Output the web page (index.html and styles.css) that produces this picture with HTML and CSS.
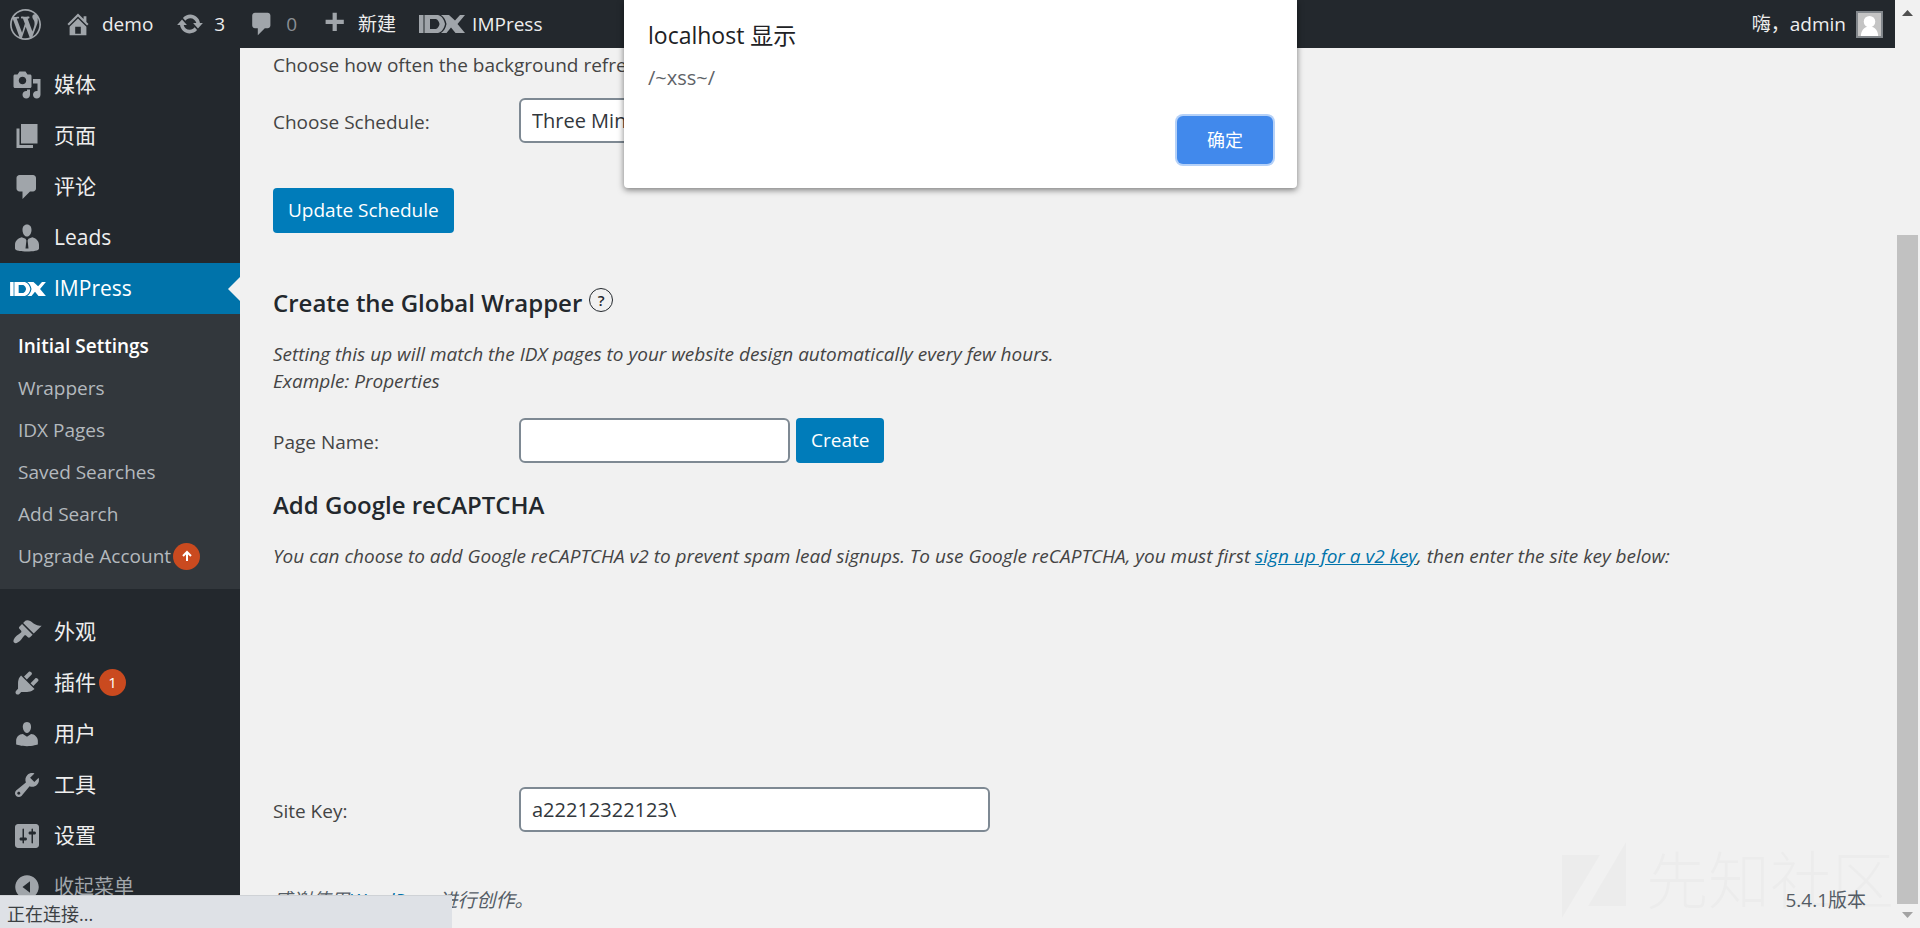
FILE: index.html
```html
<!DOCTYPE html>
<html lang="zh-CN">
<head>
<meta charset="utf-8">
<title>IMPress</title>
<link rel="stylesheet" href="styles.css">
</head>
<body>

<!-- icon sprite -->
<svg class="sprite" aria-hidden="true">
  <symbol id="i-wp" viewBox="0 0 20 20"><path d="M20 10c0-5.51-4.49-10-10-10C4.48 0 0 4.49 0 10c0 5.52 4.48 10 10 10 5.51 0 10-4.48 10-10zM7.78 15.37L4.37 6.22c.55-.02 1.17-.08 1.17-.08.5-.06.44-1.13-.06-1.11 0 0-1.45.11-2.37.11-.18 0-.37 0-.58-.01C4.12 2.69 6.87 1.11 10 1.11c2.33 0 4.45.87 6.05 2.34-.68-.11-1.65.39-1.65 1.58 0 .74.45 1.36.9 2.1.35.61.55 1.36.55 2.46 0 1.49-1.4 5-1.4 5l-3.03-8.37c.54-.02.82-.17.82-.17.5-.05.44-1.25-.06-1.22 0 0-1.44.12-2.38.12-.87 0-2.33-.12-2.33-.12-.5-.03-.56 1.2-.06 1.22l.92.08 1.26 3.41zM17.41 10c.24-.64.74-1.87.43-4.25.7 1.29 1.05 2.71 1.05 4.25 0 3.29-1.73 6.24-4.4 7.78.97-2.59 1.94-5.2 2.92-7.78zM6.1 18.09C3.12 16.65 1.11 13.53 1.11 10c0-1.3.23-2.48.72-3.59C3.25 10.3 4.67 14.2 6.1 18.09zm4.03-6.63l2.58 6.98c-.86.29-1.76.45-2.71.45-.79 0-1.57-.11-2.29-.33.81-2.38 1.62-4.74 2.42-7.1z"/></symbol>
  <symbol id="i-home" viewBox="0 0 20 20"><path d="M16 8.5l1.53 1.53-1.06 1.06L10 4.6l-6.47 6.49-1.06-1.06L10 2.5l4 4v-2h2v4zm-6-2.46l6 5.99V18H4v-5.97zM12 17v-5H8v5h4z"/></symbol>
  <symbol id="i-update" viewBox="0 0 20 20"><path d="M10.2 3.28c3.53 0 6.43 2.61 6.92 6h2.08l-3.5 4-3.5-4h2.32c-.45-1.97-2.21-3.45-4.32-3.45-1.45 0-2.73.71-3.54 1.78L4.95 5.66C6.23 4.2 8.11 3.28 10.2 3.28zm-.4 13.44c-3.52 0-6.43-2.61-6.92-6H.8l3.5-4c1.17 1.33 2.33 2.67 3.5 4H5.48c.45 1.97 2.21 3.45 4.32 3.45 1.45 0 2.73-.71 3.54-1.78l1.71 1.95c-1.28 1.46-3.15 2.38-5.25 2.38z"/></symbol>
  <symbol id="i-comment" viewBox="0 0 20 20"><path d="M5 2h9c1.1 0 2 .9 2 2v7c0 1.1-.9 2-2 2h-2l-5 5v-5H5c-1.1 0-2-.9-2-2V4c0-1.1.9-2 2-2z"/></symbol>
  <symbol id="i-plus" viewBox="0 0 20 20"><path d="M17 7v3h-5v5H9v-5H4V7h5V2h3v5h5z"/></symbol>
  <symbol id="i-idx" viewBox="0 0 46 18"><path d="M0 0h4.500v18H0zM5.500 0H19c4 1 6 4.500 7 9-1 4.500-3 8-7 9H5.500zM11 4v10h6c2-1 3-2.500 3.500-5-.5-2.500-1.500-4-3.500-5z" fill-rule="evenodd"/><path d="M22 0h8l6 5.500L41 0h5l-7.500 9 7.500 9h-9.500L32 12.500 27.500 18H22c3-2 4.800-5 5.500-9C26.800 5 25 2 22 0z"/></symbol>
  <symbol id="i-media" viewBox="0 0 20 20"><path d="M13 11V4c0-.55-.45-1-1-1h-1.67L9 1H5L3.67 3H2c-.55 0-1 .45-1 1v7c0 .55.45 1 1 1h10c.55 0 1-.45 1-1zM7 4.5c1.38 0 2.5 1.12 2.5 2.5S8.38 9.5 7 9.5 4.5 8.38 4.5 7 5.62 4.5 7 4.5zM14 6h5v10.500c0 1.380-1.120 2.500-2.500 2.500S14 17.880 14 16.500s1.120-2.500 2.500-2.500c.17 0 .34.02.5.05V9h-3V6zm-4 8.050V13h2v3.500c0 1.380-1.120 2.500-2.500 2.500S7 17.880 7 16.500 8.120 14 9.500 14c.17 0 .34.02.5.05z"/></symbol>
  <symbol id="i-pages" viewBox="0 0 20 20"><path d="M6 15V2h11v13H6zm-1 1h9v2H3V5h2v11z"/></symbol>
  <symbol id="i-lead" viewBox="0 0 20 20"><path d="M10 1c2 0 3 1.500 3 3.600S11.800 9 10 9 7 6.700 7 4.600 8 1 10 1zM6.500 9.500l2.500 1 .6 1.200L9 17h2l-.6-5.300.6-1.200 2.500-1C16 10 18 12 18 14.500V17c0 1.500-4 2-8 2s-8-.5-8-2v-2.500C2 12 4 10 6.500 9.500z"/></symbol>
  <symbol id="i-brush" viewBox="0 0 20 20"><path d="M14.480 11.060L7.410 3.990l1.500-1.500c.5-.56 2.300-.47 3.510.32 1.210.8 1.430 1.280 2.910 2.100 1.180.64 2.450 1.260 4.450.85zm-.71.71L6.700 4.700 4.930 6.470c-.39.390-.39 1.020 0 1.410l1.060 1.060c.39.390.39 1.030 0 1.420-.6.6-1.430 1.110-2.210 1.690-.35.260-.7.530-1.010.840C1.430 14.230.4 16.080 1.400 17.070c.990 1 2.840-.03 4.180-1.360.31-.31.580-.66.850-1.020.57-.78 1.080-1.610 1.690-2.210.39-.39 1.020-.39 1.410 0l1.060 1.060c.39.390 1.020.390 1.410 0z"/></symbol>
  <symbol id="i-plug" viewBox="0 0 20 20"><path d="M13.110 4.360L9.870 7.600 8 5.730l3.240-3.240c.35-.34 1.050-.2 1.560.32.520.510.660 1.210.310 1.550zm-8 1.770l.91-1.120 9.010 9.010-1.190.84c-.71.710-2.630 1.160-3.820 1.160H6.140L4.900 17.260c-.59.590-1.540.590-2.120 0-.59-.58-.59-1.530 0-2.120l1.240-1.240v-3.880c0-1.130.4-3.190 1.090-3.890zm7.260 3.970l3.240-3.240c.34-.35 1.040-.21 1.550.310.520.510.660 1.210.310 1.550l-3.240 3.250z"/></symbol>
  <symbol id="i-user" viewBox="0 0 20 20"><path d="M10 9.250c-2.270 0-2.730-3.440-2.730-3.440C7 4.020 7.820 2 9.970 2c2.160 0 2.980 2.020 2.710 3.810 0 0-.41 3.440-2.680 3.440zm0 2.570L12.720 10c2.390 0 4.520 2.330 4.520 4.530v2.490s-3.650 1.130-7.240 1.130c-3.650 0-7.240-1.130-7.240-1.130v-2.490c0-2.250 1.940-4.480 4.470-4.480z"/></symbol>
  <symbol id="i-tool" viewBox="0 0 20 20"><path d="M16.680 9.770c-1.340 1.340-3.300 1.670-4.950.990l-5.410 6.520c-.99.990-2.590.990-3.580 0s-.99-2.590 0-3.570l6.520-5.420c-.68-1.650-.35-3.610.99-4.950 1.280-1.280 3.120-1.620 4.720-1.060l-2.890 2.890 2.820 2.820 2.860-2.870c.53 1.580.18 3.390-1.080 4.650zM3.810 16.210c.4.390 1.040.390 1.430 0 .4-.4.400-1.040 0-1.430-.39-.4-1.030-.4-1.430 0-.39.390-.39 1.030 0 1.430z"/></symbol>
  <symbol id="i-settings" viewBox="0 0 20 20"><path d="M18 16V4c0-1.100-.9-2-2-2H4c-1.100 0-2 .9-2 2v12c0 1.100.9 2 2 2h12c1.100 0 2-.9 2-2zM8 11h1c.55 0 1 .45 1 1s-.45 1-1 1H8v1.500c0 .28-.22.500-.5.500s-.5-.22-.5-.5V13H6c-.55 0-1-.45-1-1s.45-1 1-1h1V5.500c0-.28.22-.5.500-.5s.5.220.5.500V11zm5-2h-1c-.55 0-1-.45-1-1s.45-1 1-1h1V5.500c0-.28.220-.5.500-.5s.5.220.5.500V7h1c.55 0 1 .45 1 1s-.45 1-1 1h-1v5.500c0 .28-.22.500-.5.500s-.5-.22-.5-.5V9z"/></symbol>
  <symbol id="i-collapse" viewBox="0 0 20 20"><path d="M10 2.160c4.330 0 7.840 3.510 7.840 7.840s-3.510 7.840-7.840 7.840S2.160 14.330 2.160 10 5.670 2.160 10 2.160zm2 11.720V6.120L7 10z"/></symbol>
</svg>

<header class="adminbar">
  <a href="#" class="ab-item" aria-label="WordPress"><svg class="ab-wp"><use href="#i-wp"/></svg></a>
  <a href="#" class="ab-item"><svg class="ab-icon"><use href="#i-home"/></svg>demo</a>
  <a href="#" class="ab-item"><svg class="ab-icon"><use href="#i-update"/></svg>3</a>
  <a href="#" class="ab-item muted"><svg class="ab-icon"><use href="#i-comment"/></svg>0</a>
  <a href="#" class="ab-item"><svg class="ab-icon"><use href="#i-plus"/></svg>新建</a>
  <a href="#" class="ab-item ab-idx"><svg class="idx-icon"><use href="#i-idx"/></svg>IMPress</a>
  <a href="#" class="ab-item ab-account">嗨，admin
    <svg class="avatar" viewBox="0 0 24 24"><rect width="24" height="24" fill="#c4c4c4"/><circle cx="12" cy="9" r="6" fill="#fff"/><path d="M3 24c0-5 3-10 9-10s9 5 9 10z" fill="#fff"/></svg>
  </a>
</header>

<nav class="menu">
  <a href="#" class="menu-item"><svg class="menu-icon"><use href="#i-media"/></svg>媒体</a>
  <a href="#" class="menu-item"><svg class="menu-icon"><use href="#i-pages"/></svg>页面</a>
  <a href="#" class="menu-item"><svg class="menu-icon"><use href="#i-comment"/></svg>评论</a>
  <a href="#" class="menu-item"><svg class="menu-icon"><use href="#i-lead"/></svg>Leads</a>
  <a href="#" class="menu-item current"><svg class="idx-icon"><use href="#i-idx"/></svg>IMPress</a>
  <div class="submenu">
    <a href="#" class="current">Initial Settings</a>
    <a href="#">Wrappers</a>
    <a href="#">IDX Pages</a>
    <a href="#">Saved Searches</a>
    <a href="#">Add Search</a>
    <a href="#">Upgrade Account<span class="count"><svg viewBox="0 0 12 12"><path d="M6 11V2M2 6l4-4 4 4" fill="none" stroke="#fff" stroke-width="2"/></svg></span></a>
  </div>
  <a href="#" class="menu-item"><svg class="menu-icon"><use href="#i-brush"/></svg>外观</a>
  <a href="#" class="menu-item"><svg class="menu-icon"><use href="#i-plug"/></svg>插件<span class="count">1</span></a>
  <a href="#" class="menu-item"><svg class="menu-icon"><use href="#i-user"/></svg>用户</a>
  <a href="#" class="menu-item"><svg class="menu-icon"><use href="#i-tool"/></svg>工具</a>
  <a href="#" class="menu-item"><svg class="menu-icon"><use href="#i-settings"/></svg>设置</a>
  <button type="button" class="menu-item collapse"><svg class="menu-icon"><use href="#i-collapse"/></svg>收起菜单</button>
</nav>

<main class="content">
  <p class="intro">Choose how often the background refresh runs.</p>
  <div class="row schedule">
    <label for="schedule">Choose Schedule:</label>
    <select id="schedule"><option>Three Minutes</option></select>
  </div>
  <button type="button" class="button">Update Schedule</button>

  <h3>Create the Global Wrapper <a href="#" class="help">?</a></h3>
  <p class="desc">Setting this up will match the IDX pages to your website design automatically every few hours.<br>Example: Properties</p>
  <div class="row page-name">
    <label for="pagename">Page Name:</label>
    <input type="text" id="pagename" class="short">
    <button type="button" class="button">Create</button>
  </div>

  <h3 class="recaptcha">Add Google reCAPTCHA</h3>
  <p class="desc">You can choose to add Google reCAPTCHA v2 to prevent spam lead signups. To use Google reCAPTCHA, you must first <a href="#">sign up for a v2 key</a>, then enter the site key below:</p>
  <div class="row site-key">
    <label for="sitekey">Site Key:</label>
    <input type="text" id="sitekey" class="long" value="a22212322123\">
  </div>

  <footer class="footer">
    <p class="thanks">感谢使用<a href="#">WordPress</a>进行创作。</p>
    <p>5.4.1版本</p>
  </footer>
</main>

<div class="scrollbar" aria-hidden="true">
  <svg class="arrow" viewBox="0 0 11 6"><path d="M0 6L5.500 0 11 6z" fill="#505050"/></svg>
  <div class="track"><div class="thumb"></div></div>
  <svg class="arrow" viewBox="0 0 11 6"><path d="M0 0h11L5.500 6z" fill="#a3a3a3"/></svg>
</div>

<div class="watermark">
  <svg viewBox="0 0 64 76"><path d="M0 13h38L0 76zM64 0v64H26z"/></svg>先知社区
</div>

<div class="dialog" role="dialog" aria-labelledby="dlgtitle">
  <h2 id="dlgtitle">localhost 显示</h2>
  <p>/~xss~/</p>
  <button type="button">确定</button>
</div>

<div class="status">正在连接...</div>

</body>
</html>
```
FILE: styles.css
```css
* {
  box-sizing: border-box;
}

body {
  margin: 0;
  height: 100vh;
  overflow: hidden;
  display: grid;
  grid-template-columns: 240px 1fr 25px;
  grid-template-rows: 48px 1fr;
  background: #f1f1f1;
  color: #444;
  font-family: "Open Sans", "Noto Sans CJK SC", sans-serif;
  font-size: 19px;
  line-height: 27px;
}

a {
  color: #0073aa;
}

h2, h3, p {
  margin: 0;
}

button, input, select {
  font: inherit;
}

svg {
  fill: currentColor;
  flex: none;
}

.sprite {
  position: absolute;
  width: 0;
  height: 0;
}

/* admin bar */

.adminbar {
  grid-column: 1 / 3;
  display: flex;
  align-items: center;
  gap: 23px;
  padding: 0 12px 0 10px;
  background: #23282d;
}

.ab-item {
  display: flex;
  align-items: center;
  gap: 10px;
  color: #eee;
  text-decoration: none;
}

.ab-item svg {
  color: #a0a5aa;
}

.ab-item.muted {
  color: #8a8f94;
}

.ab-wp {
  width: 31px;
  height: 31px;
}

.ab-icon {
  width: 28px;
  height: 28px;
}

.ab-item.ab-idx {
  gap: 7px;
}

.ab-account {
  margin-left: auto;
}

.ab-account .avatar {
  width: 27px;
  height: 27px;
  border: 2px solid #82878c;
}

/* side menu */

.menu {
  display: flex;
  flex-direction: column;
  padding-top: 11px;
  min-height: 0;
  background: #23282d;
}

.menu-item {
  display: flex;
  align-items: center;
  gap: 12px;
  flex: none;
  height: 51px;
  padding: 0 0 0 12px;
  color: #eee;
  font-size: 21px;
  text-decoration: none;
}

.menu-icon {
  width: 30px;
  height: 30px;
  color: #a0a5aa;
}

.idx-icon {
  width: 46px;
  height: 18px;
}

.menu-item.current {
  position: relative;
  gap: 8px;
  padding-left: 10px;
  background: #0073aa;
  color: #fff;
}

.menu-item .idx-icon {
  width: 36px;
  height: 14px;
}

.menu-item.current::after {
  content: "";
  position: absolute;
  right: 0;
  top: 14px;
  border: 12px solid transparent;
  border-left: 0;
  border-right-color: #f1f1f1;
}

.submenu {
  flex: none;
  padding: 11px 0 12px;
  margin-bottom: 17px;
  background: #32373c;
}

.submenu a {
  display: flex;
  align-items: center;
  height: 42px;
  padding-left: 18px;
  color: #b4b9be;
  text-decoration: none;
}

.submenu .current {
  color: #fff;
  font-weight: 600;
}

.count {
  display: inline-flex;
  align-items: center;
  justify-content: center;
  width: 27px;
  height: 27px;
  margin-left: 2px;
  border-radius: 50%;
  background: #ca4a1f;
  color: #fff;
  font-size: 15px;
}

.count svg {
  width: 12px;
  height: 12px;
}

.menu-item .count {
  margin-left: -9px;
}

.collapse {
  border: 0;
  background: none;
  color: #a0a5aa;
  font-size: 20px;
}

/* settings page */

.content {
  display: flex;
  flex-direction: column;
  align-items: flex-start;
  min-height: 0;
  padding: 4px 29px 0 33px;
}

.row {
  display: flex;
  gap: 6px;
}

.row label {
  width: 240px;
  padding-top: 4px;
}

.row input, .row select {
  height: 45px;
  padding: 0 11px;
  border: 2px solid #7e8993;
  border-radius: 6px;
  background: #fff;
  color: #32373c;
  font-size: 20px;
}

.row select {
  appearance: none;
  width: 240px;
}

.row .short {
  width: 271px;
}

.row .long {
  width: 471px;
}

.button {
  height: 45px;
  padding: 0 15px;
  border: 0;
  border-radius: 4px;
  background: #007cba;
  color: #fff;
}

.schedule {
  align-items: center;
  margin: 19px 0 45px;
}

h3 {
  display: flex;
  gap: 7px;
  margin: 52px 0 20px;
  color: #23282d;
  font-size: 24px;
  font-weight: 600;
  line-height: 36px;
}

.help {
  width: 24px;
  height: 24px;
  margin-top: 3px;
  border: 1px solid #23282d;
  border-radius: 50%;
  color: #23282d;
  font-size: 15px;
  line-height: 22px;
  text-align: center;
  text-decoration: none;
}

.desc {
  font-style: italic;
}

.page-name {
  align-items: center;
  margin-top: 23px;
}

h3.recaptcha {
  margin-top: 24px;
}

.site-key {
  align-items: center;
  margin-top: 217px;
}

.footer {
  align-self: stretch;
  display: flex;
  justify-content: space-between;
  margin-top: 55px;
  color: #555d66;
}

.thanks {
  font-style: italic;
}

/* window scrollbar */

.scrollbar {
  grid-column: 3;
  grid-row: 1 / 3;
  display: flex;
  flex-direction: column;
  align-items: center;
  padding: 10px 0;
}

.arrow {
  width: 11px;
  height: 6px;
}

.track {
  flex: 1;
  width: 21px;
  padding: 219px 0 8px;
}

.thumb {
  height: 100%;
  background: #c1c1c1;
}

/* overlays */

.watermark {
  position: absolute;
  right: 26px;
  bottom: 10px;
  display: flex;
  align-items: center;
  gap: 20px;
  color: rgba(0, 0, 0, .02);
  font-size: 62px;
  font-weight: 300;
  line-height: 76px;
}

.watermark svg {
  width: 64px;
  height: 76px;
}

.dialog {
  position: absolute;
  top: 0;
  left: 624px;
  width: 673px;
  display: flex;
  flex-direction: column;
  padding: 17px 24px 24px;
  border-radius: 0 0 4px 4px;
  background: #fff;
  box-shadow: 0 2px 6px rgba(0, 0, 0, .5);
  color: #5f6368;
  font-size: 20px;
}

.dialog h2 {
  margin-bottom: 11px;
  color: #202124;
  font-size: 23px;
  font-weight: 400;
  line-height: 36px;
}

.dialog button {
  align-self: flex-end;
  width: 96px;
  height: 48px;
  margin-top: 25px;
  border: 0;
  border-radius: 6px;
  background: #4189ec;
  box-shadow: 0 0 0 2px #b5d1f8;
  color: #fff;
  font-size: 18px;
}

.status {
  position: absolute;
  left: 0;
  bottom: 0;
  width: 452px;
  height: 33px;
  padding: 5px 7px 0;
  border-top: 1px solid #cfd2d6;
  background: #dee1e6;
  color: #3c4043;
  font-size: 18px;
}
```
